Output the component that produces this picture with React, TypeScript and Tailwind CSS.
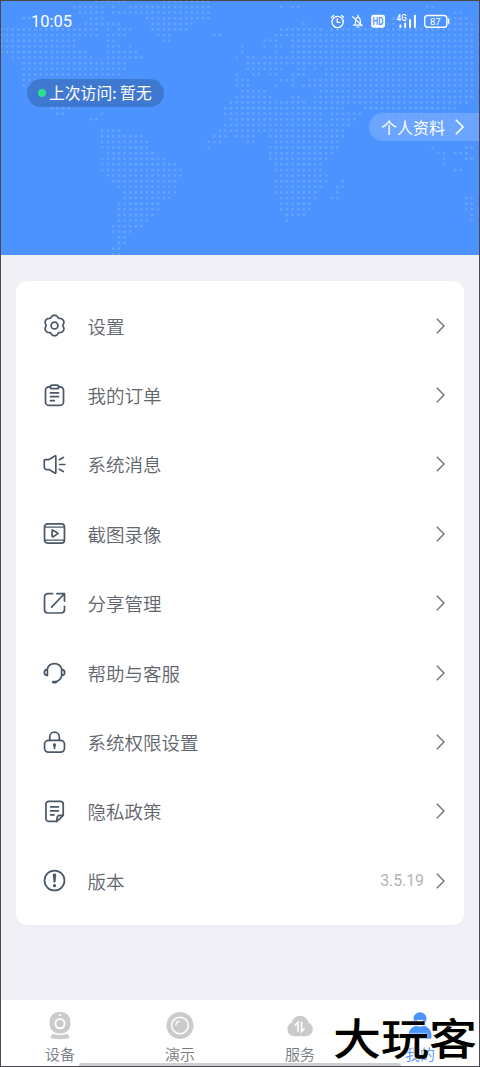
import React from 'react';

// Dotted world map: every row lists [first column, last column] runs
const MAP_ROWS: number[][][] = [
  [[17, 22], [29, 37]],
  [[13, 18], [20, 20], [23, 37], [50, 50], [52, 53], [76, 77]],
  [[14, 18], [20, 21], [22, 37], [81, 82]],
  [[4, 5], [16, 18], [26, 37], [70, 70], [80, 83]],
  [[15, 21], [27, 34], [54, 54], [69, 70], [80, 84]],
  [[0, 17], [19, 19], [21, 23], [27, 33], [50, 57], [59, 84]],
  [[0, 17], [19, 22], [28, 30], [38, 39], [49, 84]],
  [[0, 13], [19, 20], [29, 30], [47, 49], [52, 84]],
  [[0, 13], [19, 21], [23, 23], [43, 43], [47, 47], [49, 50], [52, 84]],
  [[0, 15], [19, 24], [43, 43], [49, 49], [52, 84]],
  [[2, 16], [19, 25], [42, 42], [44, 45], [47, 84]],
  [[4, 22], [44, 46], [47, 84]],
  [[4, 22], [44, 50], [53, 54], [56, 56], [58, 84]],
  [[4, 21], [42, 42], [45, 46], [48, 49], [52, 54], [58, 84]],
  [[4, 19], [42, 42], [43, 44], [50, 52], [55, 84]],
  [[4, 18], [42, 44], [49, 49], [52, 52], [54, 84]],
  [[5, 17], [43, 47], [57, 84]],
  [[6, 9], [17, 17], [42, 48], [52, 53], [56, 84]],
  [[7, 10], [41, 54], [56, 83]],
  [[9, 12], [40, 61], [65, 81]],
  [[10, 11], [18, 18], [40, 57], [59, 64], [68, 81]],
  [[16, 17], [41, 57], [59, 63], [70, 75], [84, 84]],
  [[40, 62], [70, 73], [78, 80], [84, 84]],
  [[18, 21], [39, 61], [71, 72], [79, 80]],
  [[18, 25], [38, 40], [42, 45], [48, 61], [71, 71]],
  [[18, 26], [37, 39], [44, 45], [49, 60]],
  [[18, 26], [37, 37], [48, 60], [77, 77], [83, 84]],
  [[19, 27], [48, 59], [78, 79], [81, 83]],
  [[18, 29], [48, 58], [79, 79], [83, 84]],
  [[18, 31], [49, 57], [79, 79]],
  [[18, 32], [49, 57], [81, 82]],
  [[19, 32], [50, 58]],
  [[20, 31], [49, 58], [61, 61]],
  [[21, 31], [49, 57], [60, 61]],
  [[22, 31], [49, 56], [60, 60]],
  [[22, 30], [50, 56], [59, 60], [83, 84]],
  [[21, 28], [50, 55], [83, 84]],
  [[21, 28], [50, 55], [83, 84]],
  [[21, 27], [51, 54], [84, 84]],
  [[21, 26], [51, 51], [84, 84]],
  [[20, 25]],
  [[20, 23]],
  [[21, 22]],
  [[21, 22]],
  [[20, 21]],
  [[20, 21]],
];

const WorldMap = () => (
  <svg className="absolute inset-0" width="478" height="254" fill="#fff" fillOpacity="0.15">
    {MAP_ROWS.map((runs, row) =>
      runs.map(([from, to]) =>
        Array.from({ length: to - from + 1 }, (_, i) => (
          <circle key={`${row}-${from + i}`} cx={0.4 + (from + i) * 5.6} cy={0.4 + row * 5.62} r="1.45" />
        ))
      )
    )}
  </svg>
);

const StatusIcons = () => (
  <svg width="122" height="20" viewBox="330 12 122 20" fill="none" stroke="#fff" strokeWidth="1.4" strokeLinecap="round">
    <circle cx="337.6" cy="22" r="5.6" />
    <path d="M337.3 18.8v3.6h2.6M331.6 17.2l2-1.8M343.6 17.2l-2-1.8" />
    <path d="M353.4 25.2h8.6M354.8 25c.8-1.2.6-3 .9-4.8.5-3.8 4-3.8 4.5 0 .2 1 .2 2 .4 3M357.9 15.2v1M356.8 27h2M352.6 16.6l9.4 9.2" strokeWidth="1.2" />
    <rect x="371.2" y="14.8" width="13.8" height="13" rx="2.4" fill="#fff" stroke="none" />
    <text x="378.1" y="25.1" textAnchor="middle" fill="#4c93ff" stroke="none" fontSize="10.5" fontWeight="600" fontFamily="Roboto, sans-serif" textLength="11" lengthAdjust="spacingAndGlyphs">HD</text>
    <text x="396.6" y="21.2" fill="#fff" stroke="none" fontSize="8.5" fontWeight="500" fontFamily="Roboto, sans-serif" textLength="10" lengthAdjust="spacingAndGlyphs">4G</text>
    <path d="M400.4 25.4v1.6M405.2 23.6v3.4M410 20v7M414.9 15.7v11.3" strokeWidth="2" />
    <rect x="424.7" y="15.5" width="22.2" height="11.8" rx="3" />
    <path d="M448.6 19.6v3.4" strokeWidth="1.5" />
    <text x="435.3" y="24.9" textAnchor="middle" fill="#fff" stroke="none" fontSize="9.5" fontFamily="Roboto, sans-serif">87</text>
  </svg>
);

const Chevron = ({ className }: { className: string }) => (
  <svg className={className} width="9" height="16" viewBox="0 0 9 16" fill="none" stroke="currentColor">
    <path d="M.8 .8L8 8 .8 15.2" />
  </svg>
);

// Six-lobed gear outline with one lobe pointing up
const GEAR_POINTS = Array.from({ length: 72 }, (_, i) => {
  const angle = (i * Math.PI) / 36;
  const radius = 9.9 + 0.95 * Math.cos(6 * angle) - 0.2 * Math.cos(12 * angle);
  return `${(12 + radius * Math.sin(angle)).toFixed(2)},${(12 - radius * Math.cos(angle)).toFixed(2)}`;
}).join(' ');

const SettingsIcon = () => (
  <>
    <polygon points={GEAR_POINTS} />
    <circle cx="12" cy="12" r="3.6" />
  </>
);

const OrdersIcon = () => (
  <>
    <path d="M8 2.9H6.3a3.7 3.7 0 0 0-3.7 3.7v12.1a3.7 3.7 0 0 0 3.7 3.7h11.4a3.7 3.7 0 0 0 3.7-3.7V6.6a3.7 3.7 0 0 0-3.7-3.7H16" />
    <rect x="7.6" y="1.2" width="8.8" height="3.6" rx="1.8" />
    <path d="M7.8 9.2h8.4M7.8 13.2h8.4M7.8 17.4h4" />
  </>
);

const MessageIcon = () => (
  <path d="M2.5 6.8h3.8l6-3.7c.6-.4 1.1-.1 1.1.6v16.600c0 .7-.5 1-1.1.6l-6-3.600H4a2.700 2.700 0 0 1-2.700-2.700V8a1.200 1.200 0 0 1 1.200-1.200zM17.500 12h5.200M17 7l4.200-2.400M17 17l4.200 2.400" />
);

const RecordIcon = () => (
  <>
    <path d="M1.9 5.4h20.2M1.9 18.8h20.2" strokeWidth="1.3" />
    <rect x="1.6" y="2" width="20.8" height="20" rx="3.2" />
    <path d="M9.5 9.1c0-.6.5-.9 1-.6l4.7 2.9c.5.3.5.7 0 1l-4.7 2.900c-.5.3-1 0-1-.6z" />
  </>
);

const ShareIcon = () => (
  <path d="M10 1.700H5a3.400 3.400 0 0 0-3.400 3.400v13.400A3.400 3.400 0 0 0 5 21.900h14a3.400 3.400 0 0 0 3.400-3.400V15M14.500 1.700h7.900v7.800M22 2.100L9 15.800" />
);

const ServiceIcon = () => (
  <>
    <path d="M4.400 8.600a7.900 7.900 0 0 1 15.200 0M19.600 14.800c-.6 3.800-2.900 6-6.200 7M4.600 8.800v6.200M19.400 8.800v6.200M4.600 8.800c-4.300.4-4.300 5.800 0 6.200M19.400 8.800c4.300.4 4.300 5.800 0 6.200" />
    <path d="M10.800 22h2.600" strokeWidth="3" />
  </>
);

const LockIcon = () => (
  <>
    <rect x="1.600" y="9.800" width="20.800" height="12.300" rx="4" />
    <path d="M7 9.800V6.200a5 5 0 0 1 10 0v3.600" />
    <path d="M12 14.400v.8" strokeWidth="3" />
    <path d="M12 14.800v3.400" />
  </>
);

const PolicyIcon = () => (
  <path d="M14.500 22.400H6a2.900 2.900 0 0 1-2.900-2.900V4.300A2.900 2.900 0 0 1 6 1.400h12.200a2.900 2.900 0 0 1 2.900 2.900V16l-6.600 6.400v-2.700c0-2.500 1.200-3.700 3.600-3.700h3M8 7.200h8M8 11.400h8M8 15.600h3.500" />
);

const VersionIcon = () => (
  <>
    <circle cx="12" cy="12" r="10.4" />
    <path d="M10.200 6c0-1.800 3.600-1.800 3.600 0l-.8 8h-2z" fill="currentColor" stroke="none" />
    <circle cx="12" cy="17.4" r="1.7" fill="currentColor" stroke="none" />
  </>
);

const MENU = [
  { label: '设置', icon: <SettingsIcon /> },
  { label: '我的订单', icon: <OrdersIcon /> },
  { label: '系统消息', icon: <MessageIcon /> },
  { label: '截图录像', icon: <RecordIcon /> },
  { label: '分享管理', icon: <ShareIcon /> },
  { label: '帮助与客服', icon: <ServiceIcon /> },
  { label: '系统权限设置', icon: <LockIcon /> },
  { label: '隐私政策', icon: <PolicyIcon /> },
  { label: '版本', icon: <VersionIcon />, value: '3.5.19' },
];

const TABS = [
  {
    label: '设备',
    icon: (
      <>
        <rect x="3.6" y="0" width="20.8" height="21.5" rx="9" fill="#cbcbcb" />
        <circle cx="14" cy="3" r="1.1" fill="#fff" />
        <circle cx="14" cy="11.7" r="4.6" fill="none" stroke="#fff" strokeWidth="2" />
        <path d="M7 21.200c4.200 2.200 9.800 2.200 14 0 1.500 1.600 2.600 2.800 2.600 3.900 0 1.300-.9 1.700-2.200 1.900-4.800.5-10 .5-14.800 0-1.300-.2-2.200-.6-2.200-1.900 0-1.100 1.100-2.300 2.600-3.900z" fill="#cbcbcb" stroke="#fff" strokeWidth=".6" />
      </>
    ),
  },
  {
    label: '演示',
    icon: (
      <>
        <circle cx="14" cy="13.5" r="13.5" fill="#cbcbcb" />
        <circle cx="14" cy="13.5" r="8.3" fill="none" stroke="#fff" strokeWidth="1.5" />
        <path d="M9.800 12.800c.2-1.700 1.400-3 3.200-3.500" fill="none" stroke="#fff" strokeWidth="1.4" strokeLinecap="round" />
      </>
    ),
  },
  {
    label: '服务',
    icon: (
      <>
        <path d="M7.800 24.200A7 7 0 0 1 5.600 10.800 8.600 8.600 0 0 1 22.500 10.800 7 7 0 0 1 20.300 24.200z" fill="#cbcbcb" />
        <path d="M9 13.400l3-3.200v9.600M15.600 9.600v9.800l3-3.200" fill="none" stroke="#fff" strokeWidth="1.6" />
      </>
    ),
  },
  {
    label: '我的',
    active: true,
    icon: (
      <>
        <circle cx="14" cy="6.7" r="6.5" fill="#4c93ff" />
        <path d="M10.800 8h6.400c-.8 3.200-5.600 3.200-6.400 0z" fill="#fff" />
        <path d="M2.500 25c-.5-6 3-10 7.500-11.200 2.700 1 5.300 1 8 0C22.500 15 26 19 25.500 25c0 1-.6 1.700-1.700 1.700H4.200c-1.100 0-1.700-.7-1.700-1.700z" fill="#4c93ff" />
      </>
    ),
  },
];

const Header = () => (
  <header className="relative h-[254px] shrink-0 bg-[#4c93ff] text-white">
    <WorldMap />
    <div className="relative flex h-[42px] items-center justify-between pl-[30px] pr-[27px]">
      <span className="font-[Roboto] text-[16.5px] leading-5">10:05</span>
      <StatusIcons />
    </div>
    <div className="relative ml-[26px] mt-[36px] flex h-[28px] w-[137px] items-center rounded-full bg-[#3e76cc]/90 pl-[11px]">
      <span className="size-[8px] rounded-full bg-[#2be08d]" />
      <span className="ml-[3px] whitespace-nowrap text-[15.8px] leading-7">上次访问: 暂无</span>
    </div>
    <div className="relative ml-auto mt-[6px] flex h-[28px] w-[110px] items-center rounded-l-full bg-[#6fa7ff]/90 pl-[12px]">
      <span className="whitespace-nowrap text-[16px] leading-7">个人资料</span>
      <Chevron className="ml-[10px] stroke-[1.6]" />
    </div>
  </header>
);

const MenuCard = () => (
  <main className="mx-[15px] mt-[26px] h-[644px] shrink-0 rounded-[11px] bg-white pt-[10px]">
    {MENU.map((item) => (
      <div key={item.label} className="flex h-[69.4px] items-center pl-[27px] pr-[19px] text-[#4b5868]">
        <svg width="23" height="23" viewBox="0 0 24 24" fill="none" stroke="currentColor" strokeWidth="1.8" strokeLinecap="round" strokeLinejoin="round">
          {item.icon}
        </svg>
        <span className="ml-[21.5px] flex-1 text-[18.5px] font-[350] leading-7 text-[#5f666d]">{item.label}</span>
        {item.value && <span className="mr-[12px] font-[Roboto] text-[15.8px] text-[#b3b3b3]">{item.value}</span>}
        <Chevron className="stroke-[1.4] text-[#6b747e]" />
      </div>
    ))}
  </main>
);

const TabBar = () => (
  <nav className="relative -mx-px mt-auto flex h-[66px] shrink-0 bg-white">
    {TABS.map((tab) => (
      <div key={tab.label} className="flex flex-1 flex-col items-center pt-[12px]">
        <svg width="28" height="28" viewBox="0 0 28 28">{tab.icon}</svg>
        <span className={tab.active ? 'mt-[4px] text-[15px] font-[350] leading-5 text-[#4c93ff]' : 'mt-[4px] text-[15px] font-[350] leading-5 text-[#767b80]'}>
          {tab.label}
        </span>
      </div>
    ))}
    <div className="absolute bottom-0 left-[79px] h-[3px] w-[322px] rounded-t-full bg-[#cecece]" />
    <div className="absolute left-[333px] top-[13px] origin-top scale-y-90 whitespace-nowrap text-[48px] font-medium leading-[52px] text-black [text-shadow:0_0_2px_#fffbe0,0_0_2px_#fffbe0]">
      大玩客
    </div>
  </nav>
);

export default function App() {
  return (
    <div className="flex h-[1067px] w-[480px] flex-col overflow-hidden border border-[#4b484d] bg-[#f0eff5] font-['Noto_Sans_CJK_SC',sans-serif]">
      <Header />
      <MenuCard />
      <TabBar />
    </div>
  );
}
